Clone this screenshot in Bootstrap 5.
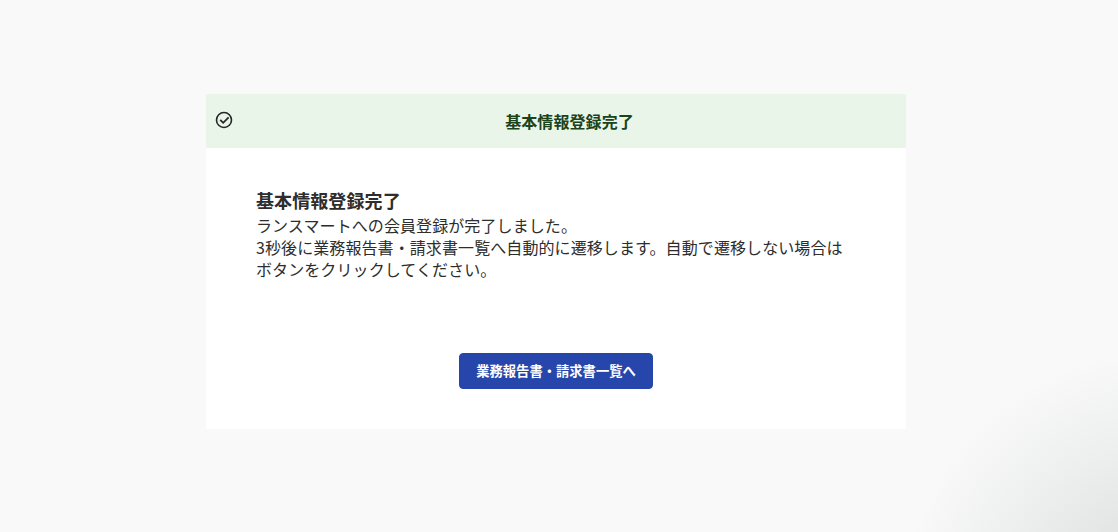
<!DOCTYPE html>
<html lang="ja">

<head>
    <meta charset="UTF-8">
    <meta name="viewport" content="width=device-width, initial-scale=1.0">
    <title>基本情報登録完了</title>
    <link rel="stylesheet" href="https://cdn.jsdelivr.net/npm/bootstrap@5.3.3/dist/css/bootstrap.min.css">
    <script src="https://cdn.jsdelivr.net/npm/bootstrap@5.3.3/dist/js/bootstrap.bundle.min.js"></script>
    <style>
        body {
            font-family: "Noto Sans CJK JP", sans-serif;
            color: #2d2d2d;
            background: radial-gradient(circle at 1170px 620px, #d6d9d8 0, #f9f9f9 272px) #f9f9f9;
            height: 532px;
            padding: 94px 6px 0 0;
            overflow: hidden;
        }

        .complete-card {
            width: 700px;
            height: 335px;
        }

        .complete-header {
            height: 54px;
            padding: 0 10px;
            background: #e9f5e9;
            color: #1b431c;
        }

        .complete-icon {
            width: 18px;
            height: 18px;
            overflow: visible;
        }

        .complete-title {
            font-size: 16px;
            letter-spacing: .08px;
            padding: 2px 0 0 9px;
        }

        .complete-body {
            padding: 40px 50px 40px;
        }

        .complete-heading {
            font-size: 18px;
            line-height: 24px;
            letter-spacing: .09px;
            padding-bottom: 2px;
        }

        .complete-text {
            font-size: 16px;
            line-height: 22px;
            letter-spacing: .09px;
            padding-right: 10px;
        }

        .complete-btn {
            --bs-btn-bg: #2746ab;
            --bs-btn-border-color: #2746ab;
            width: 194px;
            height: 36px;
            font-size: 13.3px;
            border-radius: 4px;
        }
    </style>
</head>

<body>
    <main class="complete-card bg-white mx-auto d-flex flex-column">
        <header class="complete-header d-flex align-items-center">
            <svg class="complete-icon" viewBox="0 0 18 18" fill="none" stroke="#262626" stroke-width="1.6">
                <circle cx="8" cy="8" r="7.5" />
                <path d="M4.2 7.8l3 3 5.4-5.4" stroke-width="1.8" />
            </svg>
            <h1 class="complete-title flex-fill text-center fw-bold mb-0">基本情報登録完了</h1>
        </header>
        <section class="complete-body flex-fill d-flex flex-column">
            <h2 class="complete-heading fw-bold mb-0">基本情報登録完了</h2>
            <p class="complete-text mb-0">ランスマートへの会員登録が完了しました。<br>3秒後に業務報告書・請求書一覧へ自動的に遷移します。自動で遷移しない場合はボタンをクリックしてください。</p>
            <a href="#" class="complete-btn btn btn-primary fw-bold mt-auto mx-auto p-0 d-flex align-items-center justify-content-center">業務報告書・請求書一覧へ</a>
        </section>
    </main>
</body>

</html>
